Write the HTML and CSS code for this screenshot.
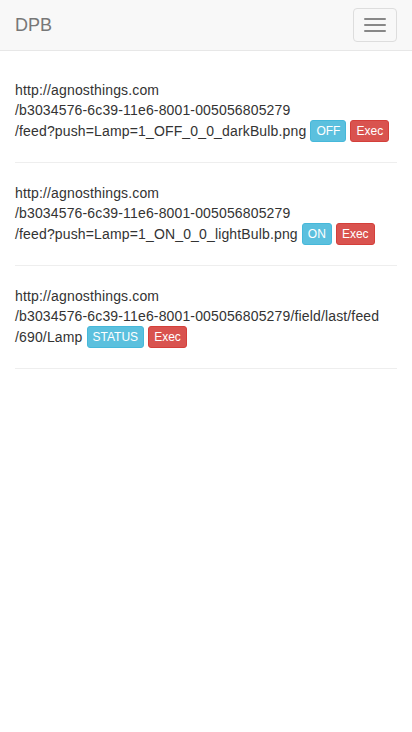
FILE: index.html
```html
<!DOCTYPE html>
<html lang="en">
<head>
<meta charset="utf-8">
<title>DPB</title>
<link rel="stylesheet" href="styles.css">
</head>
<body>
<nav class="navbar">
  <span class="brand">DPB</span>
  <button class="toggle" type="button" aria-label="Toggle navigation">
    <span class="bar"></span>
    <span class="bar"></span>
    <span class="bar"></span>
  </button>
</nav>
<main class="main">
  <div class="item">http://agnosthings.com<br>/b3034576-6c39-11e6-8001-005056805279<br>/feed?push=Lamp=1_OFF_0_0_darkBulb.png <button class="btn btn-info" type="button">OFF</button> <button class="btn btn-danger" type="button">Exec</button></div>
  <hr class="sep">
  <div class="item">http://agnosthings.com<br>/b3034576-6c39-11e6-8001-005056805279<br>/feed?push=Lamp=1_ON_0_0_lightBulb.png <button class="btn btn-info" type="button">ON</button> <button class="btn btn-danger" type="button">Exec</button></div>
  <hr class="sep">
  <div class="item">http://agnosthings.com<br>/b3034576-6c39-11e6-8001-005056805279/field/last/feed<br>/690/Lamp <button class="btn btn-info" type="button">STATUS</button> <button class="btn btn-danger" type="button">Exec</button></div>
  <hr class="sep">
</main>
</body>
</html>
```
FILE: styles.css
```css
* { box-sizing: border-box; }
html, body { margin: 0; padding: 0; }
body {
  font-family: "Liberation Sans", Arial, Helvetica, sans-serif;
  font-size: 14px;
  line-height: 20px;
  color: #333;
  background: #fff;
}
.navbar {
  display: flex;
  align-items: center;
  justify-content: space-between;
  height: 51px;
  background: #f8f8f8;
  border-bottom: 1px solid #e7e7e7;
}
.brand {
  padding: 15px;
  font-size: 18px;
  line-height: 20px;
  color: #777;
}
.toggle {
  display: flex;
  flex-direction: column;
  gap: 4px;
  margin: 0 15px 0 0;
  padding: 9px 10px;
  width: 44px;
  height: 34px;
  background: transparent;
  border: 1px solid #ddd;
  border-radius: 4px;
}
.bar {
  display: block;
  width: 22px;
  height: 2px;
  border-radius: 1px;
  background: #888;
}
.main {
  padding: 29px 15px 0;
}
.item {
  letter-spacing: 0.15px;
}
.sep {
  margin: 20px 0;
  border: 0;
  border-top: 1px solid #eee;
  height: 0;
}
.btn {
  display: inline-block;
  vertical-align: 1px;
  padding: 1px 5px;
  font-family: inherit;
  font-size: 12px;
  line-height: 18px;
  letter-spacing: 0;
  border: 1px solid transparent;
  border-radius: 3px;
  color: #fff;
  cursor: pointer;
}
.btn-info { background: #5bc0de; border-color: #46b8da; }
.btn-danger { background: #d9534f; border-color: #d43f3a; }
```
